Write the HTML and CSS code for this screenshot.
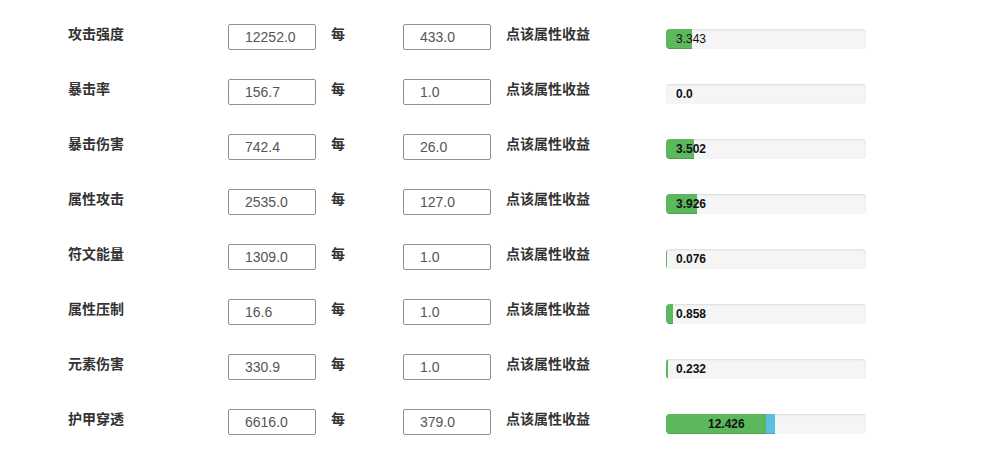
FILE: index.html
```html
<!DOCTYPE html>
<html lang="zh-CN">
<head>
<meta charset="utf-8">
<title>属性收益</title>
<link rel="stylesheet" href="styles.css">
</head>
<body>
<div class="sheet">
  <div class="row">
    <label class="name">攻击强度</label>
    <input class="field" type="text" value="12252.0">
    <span class="per">每</span>
    <input class="field" type="text" value="433.0">
    <span class="gain">点该属性收益</span>
    <div class="progress"><div class="bar bar-green" style="width:26px"></div><span class="value value-light">3.343</span></div>
  </div>
  <div class="row">
    <label class="name">暴击率</label>
    <input class="field" type="text" value="156.7">
    <span class="per">每</span>
    <input class="field" type="text" value="1.0">
    <span class="gain">点该属性收益</span>
    <div class="progress"><div class="bar bar-green" style="width:0px"></div><span class="value">0.0</span></div>
  </div>
  <div class="row">
    <label class="name">暴击伤害</label>
    <input class="field" type="text" value="742.4">
    <span class="per">每</span>
    <input class="field" type="text" value="26.0">
    <span class="gain">点该属性收益</span>
    <div class="progress"><div class="bar bar-green" style="width:28px"></div><span class="value">3.502</span></div>
  </div>
  <div class="row">
    <label class="name">属性攻击</label>
    <input class="field" type="text" value="2535.0">
    <span class="per">每</span>
    <input class="field" type="text" value="127.0">
    <span class="gain">点该属性收益</span>
    <div class="progress"><div class="bar bar-green" style="width:31px"></div><span class="value">3.926</span></div>
  </div>
  <div class="row">
    <label class="name">符文能量</label>
    <input class="field" type="text" value="1309.0">
    <span class="per">每</span>
    <input class="field" type="text" value="1.0">
    <span class="gain">点该属性收益</span>
    <div class="progress"><div class="bar bar-green" style="width:1px"></div><span class="value">0.076</span></div>
  </div>
  <div class="row">
    <label class="name">属性压制</label>
    <input class="field" type="text" value="16.6">
    <span class="per">每</span>
    <input class="field" type="text" value="1.0">
    <span class="gain">点该属性收益</span>
    <div class="progress"><div class="bar bar-green" style="width:7px"></div><span class="value">0.858</span></div>
  </div>
  <div class="row">
    <label class="name">元素伤害</label>
    <input class="field" type="text" value="330.9">
    <span class="per">每</span>
    <input class="field" type="text" value="1.0">
    <span class="gain">点该属性收益</span>
    <div class="progress"><div class="bar bar-green" style="width:2px"></div><span class="value">0.232</span></div>
  </div>
  <div class="row">
    <label class="name">护甲穿透</label>
    <input class="field" type="text" value="6616.0">
    <span class="per">每</span>
    <input class="field" type="text" value="379.0">
    <span class="gain">点该属性收益</span>
    <div class="progress"><div class="bar bar-green" style="width:100px"></div><div class="bar bar-blue" style="width:9px"></div><span class="value value-wide">12.426</span></div>
  </div>
</div>
</body>
</html>
```
FILE: styles.css
```css
* { box-sizing: border-box; }
html, body {
  margin: 0;
  padding: 0;
  background: #fff;
}
body {
  font-family: "Liberation Sans", Arial, "Noto Sans CJK SC", sans-serif;
  color: #333;
  width: 982px;
  height: 453px;
  overflow: hidden;
}
.sheet {
  padding: 24px 0 0 68px;
}
.row {
  display: grid;
  grid-template-columns: 160px 88px 87px 88px 175px 200px;
  align-items: start;
  height: 55px;
}
.name, .per, .gain {
  font-family: "Noto Sans CJK SC", "Liberation Sans", sans-serif;
  font-weight: 700;
  font-size: 14px;
  line-height: 20px;
  color: #333;
  margin-top: -1px;
}
.per, .gain {
  padding-left: 15px;
}
.field {
  width: 88px;
  height: 26px;
  margin: 0;
  padding: 0 0 0 16px;
  border: 1px solid #8f8f8f;
  border-radius: 2px;
  background: #fff;
  font-family: "Liberation Sans", Arial, sans-serif;
  font-size: 14px;
  color: #555;
  outline: none;
}
.progress {
  position: relative;
  display: flex;
  width: 200px;
  height: 20px;
  margin-top: 5px;
  background: #f5f5f5;
  border-radius: 4px;
  overflow: hidden;
  box-shadow: inset 0 1px 2px rgba(0, 0, 0, 0.1);
}
.bar {
  height: 100%;
  flex: none;
  box-shadow: inset 0 -1px 0 rgba(0, 0, 0, 0.15);
}
.bar-green { background: #5cb85c; }
.bar-blue { background: #5bc0de; }
.value {
  position: absolute;
  left: 10px;
  top: 0;
  font-family: "Liberation Sans", Arial, sans-serif;
  font-size: 12px;
  font-weight: 700;
  line-height: 20px;
  color: #111;
}
.value-light { font-weight: 400; }
.value-wide { left: 42px; }
```
